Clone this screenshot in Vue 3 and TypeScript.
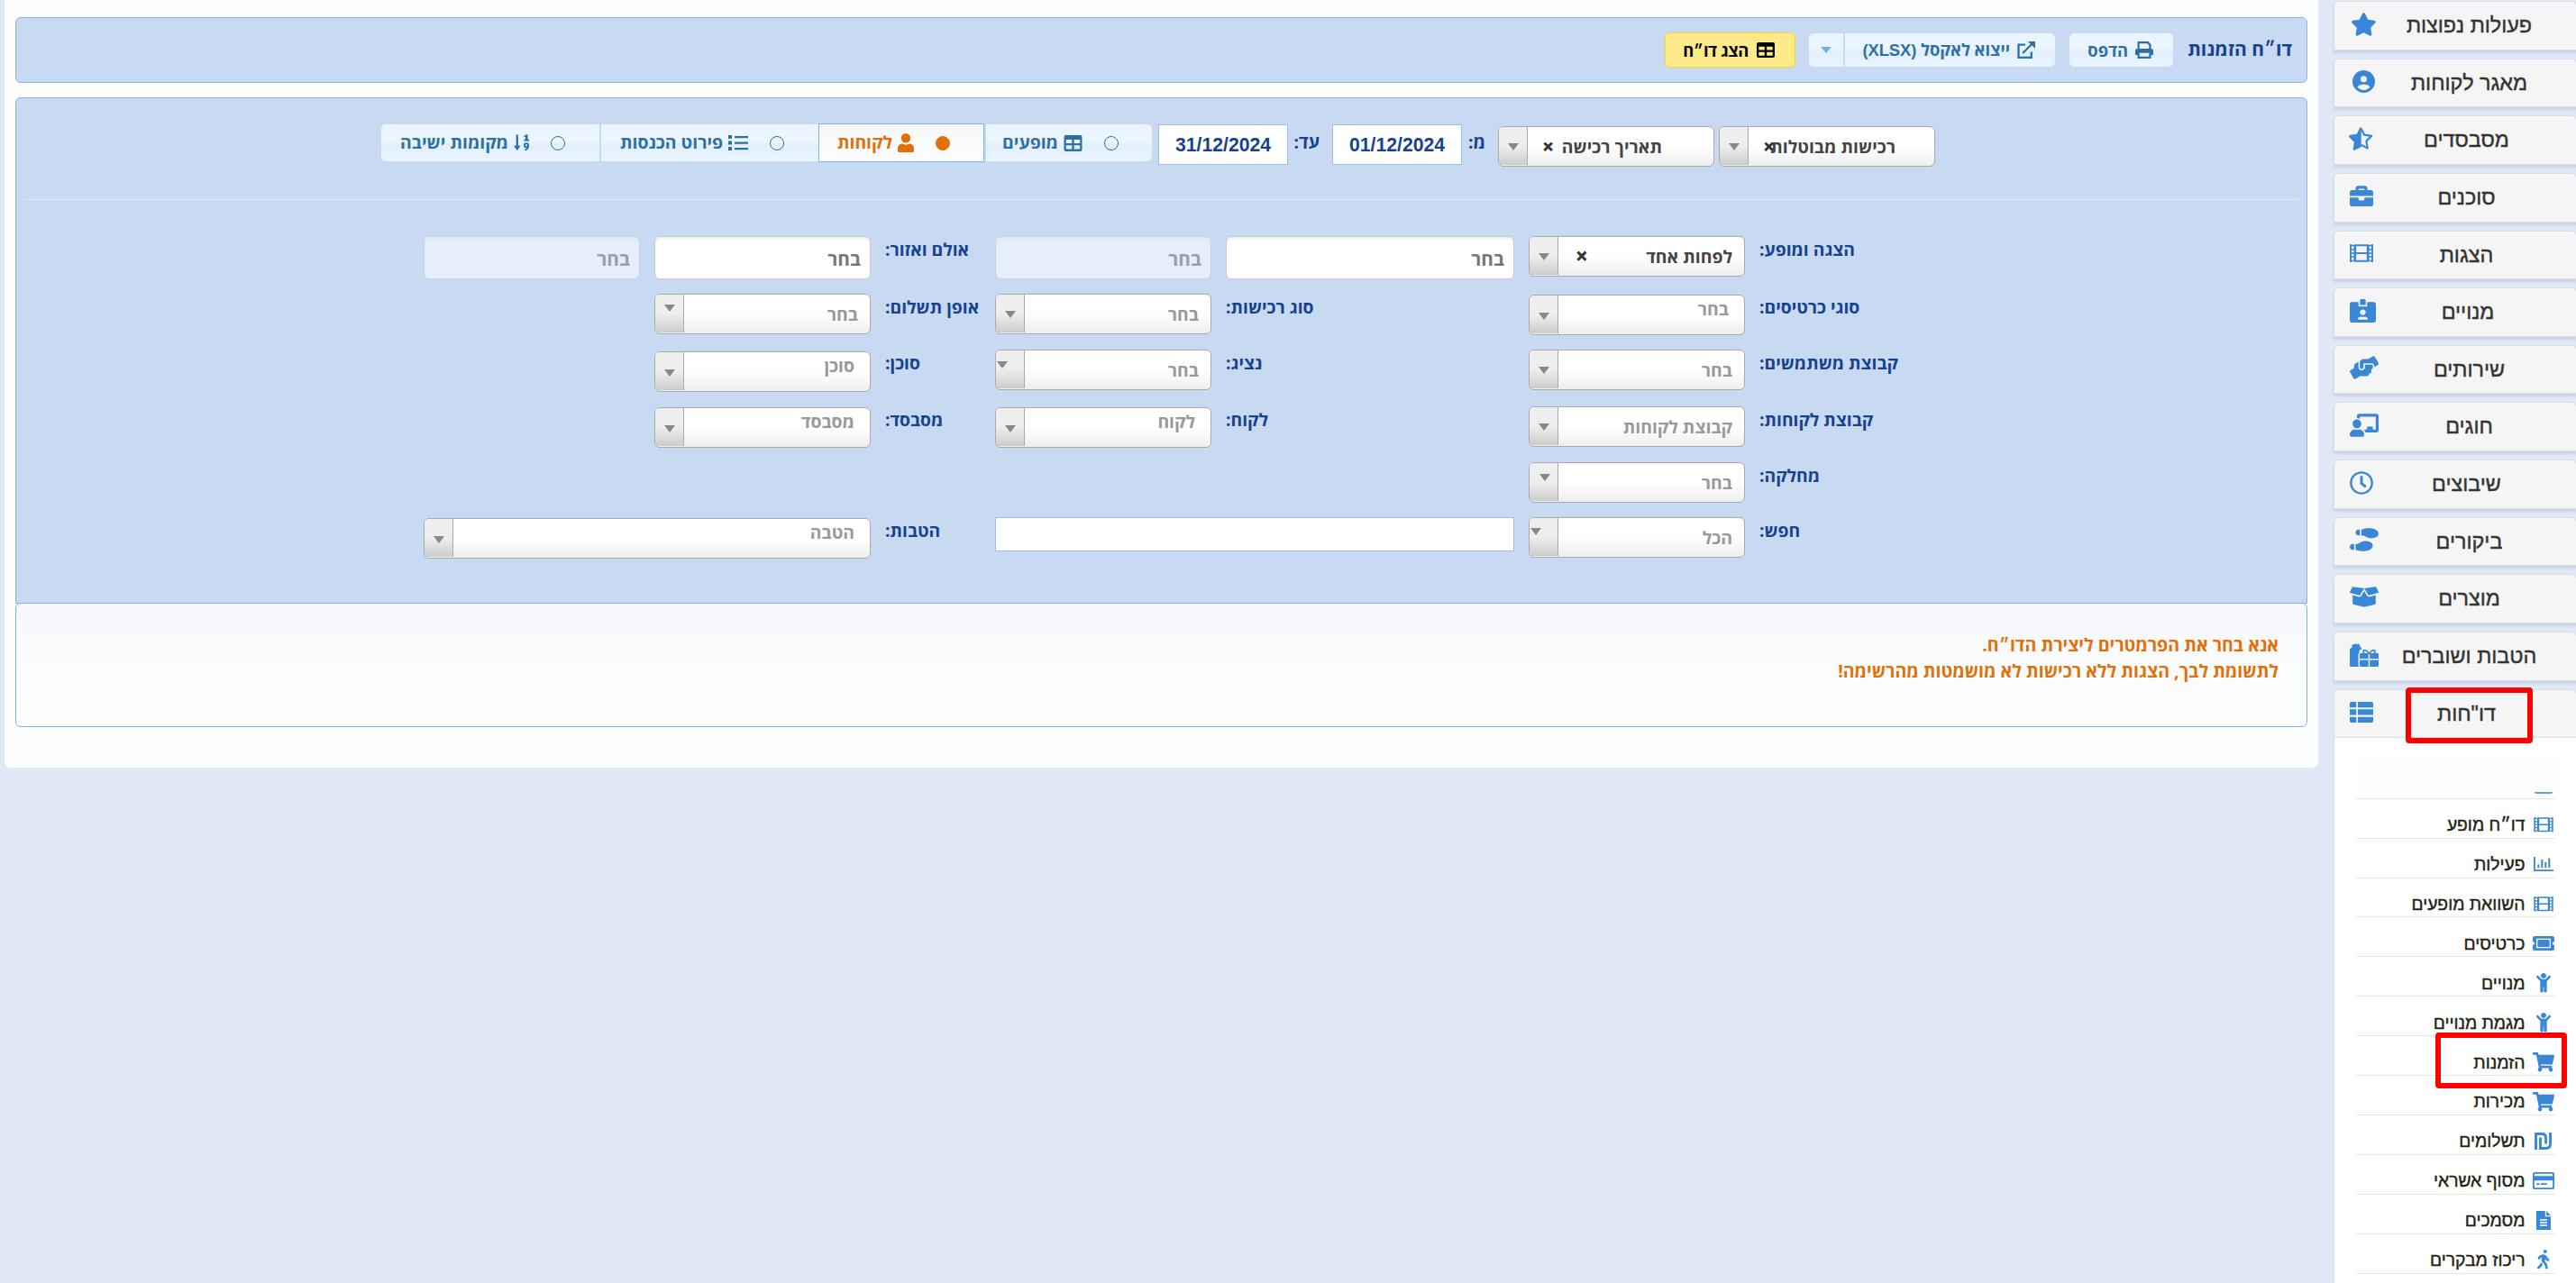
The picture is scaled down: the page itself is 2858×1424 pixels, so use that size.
<script setup lang="ts">
interface Icon { vb: string; body: string }
interface NavItem { text: string; icon: string; w: number; h: number; slot?: number; marked?: boolean }
interface Field {
  kind: 'select' | 'input' | 'disabled' | 'label' | 'plain'
  col: string
  row: number
  text?: string
  dy?: number
  high?: boolean
  picked?: boolean
  ax?: number
  ay?: number
  aw?: number
}

const p = (vb: string, d: string): Icon => ({ vb, body: `<path fill="currentColor" d="${d}"/>` })

const icons: Record<string, Icon> = {
  star: p('18 0 540 512', 'M259.3 17.8L194 150.2 47.9 171.5c-26.2 3.8-36.7 36.1-17.7 54.6l105.7 103-25 145.5c-4.5 26.3 23.2 46 46.4 33.7L288 439.6l130.7 68.7c23.2 12.2 50.9-7.4 46.4-33.7l-25-145.5 105.7-103c19-18.5 8.5-50.8-17.7-54.6L382 150.2 316.7 17.8c-11.7-23.6-45.6-23.9-57.4 0z'),
  halfStar: {
    vb: '18 0 540 512',
    body: '<path fill="currentColor" d="M292 0c-13 0-26 5.900-32.700 17.800L194 150.200 47.900 171.500c-26.200 3.800-36.700 36.100-17.700 54.600l105.700 103-25 145.500c-4.500 26.300 23.200 46 46.400 33.700L292 437z"/><path fill="none" stroke="currentColor" stroke-width="44" stroke-linejoin="round" d="M288 24l72 146 162 24-117 114 28 160-145-76"/>'
  },
  user: p('0 0 512 512', 'M399 384.200C376.900 345.800 335.400 320 288 320H224c-47.400 0-88.900 25.800-111 64.200c35.200 39.200 86.200 63.800 143 63.800s107.800-24.700 143-63.800zM0 256a256 256 0 1 1 512 0A256 256 0 1 1 0 256zm256 16a72 72 0 1 0 0-144 72 72 0 1 0 0 144z'),
  briefcase: p('0 32 512 448', 'M320 336c0 8.840-7.160 16-16 16h-96c-8.840 0-16-7.160-16-16v-48H0v144c0 25.600 22.400 48 48 48h416c25.600 0 48-22.400 48-48V288H320v48zm144-208h-80V80c0-25.600-22.400-48-48-48H176c-25.600 0-48 22.400-48 48v48H48c-25.600 0-48 22.400-48 48v80h512v-80c0-25.600-22.400-48-48-48zm-144 0H192V96h128v32z'),
  film: {
    vb: '0 0 26 20',
    body: '<path fill="none" stroke="currentColor" stroke-width="1.900" d="M6.200 1.200h13.600v17.600H6.200zM6.200 10h13.600M1 0v20M25 0v20"/><path fill="none" stroke="currentColor" stroke-width="1.500" d="M1 1.600h5M1 5.900h5M1 10h5M1 14.100h5M1 18.400h5M20 1.600h5M20 5.900h5M20 10h5M20 14.100h5M20 18.400h5M5.200 1v18M20.800 1v18"/>'
  },
  idCard: p('0 0 576 512', 'M528 64H384v96H192V64H48C21.500 64 0 85.500 0 112v352c0 26.500 21.500 48 48 48h480c26.500 0 48-21.500 48-48V112c0-26.500-21.500-48-48-48zM288 224c35.300 0 64 28.700 64 64s-28.700 64-64 64-64-28.700-64-64 28.700-64 64-64zm93.300 224H194.700c-10.400 0-18.800-10-15.600-19.800 8.300-25.600 32.400-44.200 60.900-44.200h8.200c12.300 5.100 25.700 8 39.800 8s27.600-2.900 39.800-8h8.200c28.400 0 52.500 18.500 60.900 44.200 3.200 9.900-5.200 19.800-15.600 19.800zM352 32c0-17.700-14.300-32-32-32h-64c-17.700 0-32 14.300-32 32v96h128V32z'),
  hands: p('0 0 640 512', 'M488 192H336v56c0 39.700-32.300 72-72 72s-72-32.300-72-72V126.400l-64.900 39C107.800 176.900 96 197.800 96 220.200v47.300l-80 46.200C.7 322.500-4.600 342.100 4.300 357.400l80 138.600c8.800 15.300 28.400 20.500 43.700 11.700L231.400 448H368c35.300 0 64-28.700 64-64h16c17.700 0 32-14.300 32-32v-64h8c13.300 0 24-10.700 24-24v-48c0-13.300-10.700-24-24-24zm147.700-37.400L555.700 16C546.900.7 527.300-4.500 512 4.300L408.600 64H306.400c-12 0-23.700 3.400-33.900 9.700L239 94.600c-9.400 5.800-15 16.100-15 27.100V248c0 22.100 17.900 40 40 40s40-17.900 40-40v-88h184c30.900 0 56 25.100 56 56v28.500l80-46.200c15.300-8.900 20.500-28.400 11.700-43.700z'),
  teacher: p('0 0 640 512', 'M208 352c-2.390 0-4.780.35-7.060 1.090C187.980 357.300 174.350 360 160 360c-14.350 0-27.980-2.700-40.950-6.910-2.280-.74-4.660-1.090-7.050-1.090C49.940 352-.33 402.480 0 464.620.14 490.880 21.730 512 48 512h224c26.270 0 47.860-21.120 48-47.380.33-62.140-49.940-112.620-112-112.620zm-48-32c53.020 0 96-42.980 96-96s-42.980-96-96-96-96 42.980-96 96 42.980 96 96 96zM592 0H208c-26.470 0-48 22.250-48 49.590V96c23.420 0 45.100 6.780 64 17.800V64h352v288h-64v-64H384v64h-76.240c19.100 16.690 33.120 38.730 39.690 64H592c26.470 0 48-22.250 48-49.590V49.590C640 22.250 618.470 0 592 0z'),
  clock: {
    vb: '0 0 26 26',
    body: '<circle cx="13" cy="13" r="11.700" fill="none" stroke="currentColor" stroke-width="2.300"/><path fill="none" stroke="currentColor" stroke-width="2.900" d="M13 5.300V13.500l4.800 3.800"/>'
  },
  shoes: p('0 0 640 512', 'M192 160h32V32h-32c-35.350 0-64 28.650-64 64s28.650 64 64 64zM0 416c0 35.350 28.650 64 64 64h32V352H64c-35.350 0-64 28.650-64 64zm337.460-128c-34.910 0-76.160 13.120-104.730 32-24.790 16.380-44.520 32-104.730 32v128l57.530 15.970c26.210 7.280 53.010 13.120 80.310 15.050 32.690 2.310 65.600.67 97.580-6.200C472.900 481.300 512 429.220 512 384c0-64-84.180-96-174.540-96zM491.420 7.190C459.440.32 426.530-1.330 393.840.99c-27.300 1.930-54.100 7.770-80.310 15.040L256 32v128c60.200 0 79.940 15.620 104.730 32 28.570 18.880 69.820 32 104.730 32C555.820 224 640 192 640 128c0-45.220-39.100-97.300-148.580-120.810z'),
  box: p('0 32 640 448', 'M425.700 256c-16.900 0-32.800-9-41.400-23.400L320 126l-64.200 106.600c-8.700 14.500-24.600 23.500-41.500 23.500-4.500 0-9-.6-13.300-1.900L64 215v178c0 14.700 10 27.500 24.200 31l216.200 54.100c10.200 2.500 20.900 2.500 31 0L551.800 424c14.200-3.600 24.200-16.400 24.200-31V215l-137 39.100c-4.300 1.300-8.800 1.900-13.300 1.900zm212.600-112.200L586.800 41c-3.100-6.200-9.800-9.800-16.700-8.900L320 64l91.700 152.100c3.800 6.300 11.400 9.300 18.500 7.300l197.900-56.500c9.900-2.900 14.700-13.900 10.200-23.100zM53.200 41L1.700 143.800c-4.600 9.200.3 20.200 10.100 23l197.900 56.500c7.100 2 14.700-1 18.500-7.300L320 64 69.800 32.100c-6.900-.8-13.500 2.700-16.600 8.900z'),
  gifts: {
    vb: '0 0 32 26',
    body: '<path fill="currentColor" d="M2 5L3 3.500 1.600 2.200 3.600 1.800 4 .2 5.900 1.500 7 0l1.200 1.500L10 .3l.4 1.600 2 .3L11 3.500 12.800 5c.5.500.6 1 .4 1.500C11 7 10 8.800 10.500 10.500 9.800 11.200 9.500 12 9.500 13v11c0 .8.200 1.400.5 2H1.500A1.500 1.500 0 0 1 0 24.500V7A2.200 2.200 0 0 1 2 5z"/><path fill="currentColor" d="M11 17v-4.500c0-.8.600-1.400 1.400-1.400H20.700V17zM22.200 11.100h8.400c.8 0 1.400.6 1.400 1.400V17h-9.800zM11 18.600h9.700V26h-8.300c-.8 0-1.400-.6-1.400-1.400zM22.200 18.600H32v6c0 .8-.6 1.400-1.400 1.400h-8.400z"/><path fill="none" stroke="currentColor" stroke-width="1.700" d="M16.500 11.500c-2.500-1-1.800-4 .3-3.800 1.900.2 3.200 2 4.700 3.800 1.500-1.800 2.800-3.600 4.700-3.800 2.100-.2 2.800 2.800.3 3.800"/>'
  },
  thList: {
    vb: '0 0 26 23',
    body: '<path fill="currentColor" d="M1.200 0h6v6.300H0V1.200zM9 0h15.800L26 1.200v5.100H9zM0 8.300h7.200v6.300H0zM9 8.300h17v6.300H9zM0 16.700h7.200V23h-6L0 21.800zM9 16.700h17v5.100L24.800 23H9z"/>'
  },
  bars: {
    vb: '0 0 22 16',
    body: '<path fill="none" stroke="currentColor" stroke-width="1.800" d="M.9 0v15.100H22"/><path fill="none" stroke="currentColor" stroke-width="2" d="M5.300 12.300V8.500M9.300 12.300V3M13.300 12.300V6M17.300 12.300V1.500"/>'
  },
  ticket: p('0 64 576 384', 'M128 160h320v192H128V160zm400 96c0 26.510 21.490 48 48 48v96c0 26.510-21.490 48-48 48H48c-26.510 0-48-21.490-48-48v-96c26.510 0 48-21.490 48-48s-21.490-48-48-48v-96c0-26.510 21.490-48 48-48h480c26.510 0 48 21.490 48 48v96c-26.510 0-48 21.490-48 48zm-48-104c0-13.255-10.745-24-24-24H120c-13.255 0-24 10.745-24 24v208c0 13.255 10.745 24 24 24h336c13.255 0 24-10.745 24-24V152z'),
  child: p('0 0 384 512', 'M120 72c0-39.765 32.235-72 72-72s72 32.235 72 72c0 39.764-32.235 72-72 72s-72-32.236-72-72zm254.627 1.373c-12.496-12.497-32.758-12.497-45.254 0L242.745 160H141.254L54.627 73.373c-12.496-12.497-32.758-12.497-45.254 0-12.497 12.497-12.497 32.758 0 45.255L104 213.254V480c0 17.673 14.327 32 32 32h16c17.673 0 32-14.327 32-32V368h16v112c0 17.673 14.327 32 32 32h16c17.673 0 32-14.327 32-32V213.254l94.627-94.626c12.497-12.497 12.497-32.757 0-45.255z'),
  cart: p('0 0 576 512', 'M528.120 301.319l47.273-208C578.806 78.301 567.391 64 551.990 64H159.208l-9.166-44.810C147.758 8.021 137.930 0 126.529 0H24C10.745 0 0 10.745 0 24v16c0 13.255 10.745 24 24 24h69.883l70.248 343.435C147.325 417.100 136 435.222 136 456c0 30.928 25.072 56 56 56s56-25.072 56-56c0-15.674-6.447-29.835-16.824-40h209.647C430.447 426.165 424 440.326 424 456c0 30.928 25.072 56 56 56s56-25.072 56-56c0-22.172-12.888-41.332-31.579-50.405l5.517-24.276c3.413-15.018-8.002-29.319-23.403-29.319H218.117l-6.545-32h293.145c11.206 0 20.920-7.754 23.403-18.681z'),
  shekel: {
    vb: '0 0 19 19',
    body: '<path fill="none" stroke="currentColor" stroke-width="2.900" d="M1.500 19V1.500h6.500c2.800 0 4.600 1.600 4.600 4.400V12.500M6.400 5.500V17.500h6.200c3.200 0 4.900-1.800 4.900-4.800V0"/>'
  },
  credit: {
    vb: '0 0 24 19',
    body: '<path fill="currentColor" fill-rule="evenodd" d="M2 0h20a2 2 0 0 1 2 2v15a2 2 0 0 1-2 2H2a2 2 0 0 1-2-2V2a2 2 0 0 1 2-2zM1.800 2.700V4.300H22.200V2.700l-.7-.9H2.500zM1.800 9.200v7.300l.7.700h19l.7-.7V9.200zM4.200 12.300h3.300v1.800H4.200zM9 12.300h6.800v1.800H9z"/>'
  },
  file: {
    vb: '0 0 16 21',
    body: '<path fill="currentColor" fill-rule="evenodd" d="M0 0h9.800v6.200H16V21H0zM11 0l5 5h-5zM4 9.200v1.600h8V9.200zM4 12.200v1.600h8v-1.600zM4 15.200v1.600h8v-1.600z"/>'
  },
  walk: p('0 0 320 512', 'M208 96c26.500 0 48-21.500 48-48S234.500 0 208 0s-48 21.500-48 48 21.500 48 48 48zm94.500 149.100l-23.300-11.800-9.700-29.400c-14.700-44.600-55.700-75.800-102.200-75.900-36-.1-55.900 10.100-93.300 25.200-21.600 8.700-39.300 25.200-49.700 46.200L17.600 213c-7.800 15.800-1.500 35 14.200 42.900 15.600 7.900 34.600 1.500 42.500-14.300L81 228c3.500-7 9.300-12.500 16.500-15.400l26.800-10.800-15.200 60.700c-5.200 20.800.4 42.900 14.900 58.800l59.900 65.400c7.200 7.900 12.300 17.400 14.900 27.700l18.300 73.300c4.300 17.100 21.700 27.600 38.800 23.300 17.100-4.300 27.600-21.700 23.300-38.800l-22.200-89c-2.600-10.300-7.700-19.900-14.900-27.700l-45.500-49.700 17.200-68.700 5.500 16.500c5.300 16.100 16.700 29.400 31.700 37l23.300 11.800c15.600 7.900 34.600 1.500 42.500-14.300 7.700-15.700 1.400-35.100-14.300-43zM73.600 385.800c-3.200 8.100-8 15.400-14.200 21.500l-50 50.100c-12.500 12.500-12.500 32.800 0 45.300s32.700 12.500 45.200 0l59.400-59.400c6.100-6.100 10.900-13.400 14.200-21.500l13.500-33.800c-55.300-60.300-38.700-41.800-47.400-53.700l-20.700 51.500z'),
  print: {
    vb: '0 0 20 19',
    body: '<path fill="currentColor" d="M2.500 8h15A2.500 2.500 0 0 1 20 10.500V15h-3v-2.300H3V15H0v-4.500A2.500 2.500 0 0 1 2.500 8z"/><path fill="none" stroke="currentColor" stroke-width="2.200" d="M3.600 9V1.100h10.200l2.600 2.600V9M3.600 12.500v5.400h12.800v-5.400"/>'
  },
  external: {
    vb: '0 0 20 19',
    body: '<path fill="none" stroke="currentColor" stroke-width="2.300" d="M9 3.600H1.500V17.800H15.800V11.500M6.200 13L17 2.200"/><path fill="currentColor" d="M12 0h8v8l-2.700-2.700-2.600-2.600z"/>'
  },
  table: {
    vb: '0 0 20 18',
    body: '<path fill="currentColor" fill-rule="evenodd" d="M2 0h16a2 2 0 0 1 2 2v14a2 2 0 0 1-2 2H2a2 2 0 0 1-2-2V2a2 2 0 0 1 2-2zM2.300 5v4h6.500V5zM11.200 5v4h6.500V5zM2.300 11.300v4.200h6.500v-4.200zM11.200 11.300v4.200h6.500v-4.200z"/>'
  },
  person: {
    vb: '0 0 18 21',
    body: '<circle cx="9" cy="5.200" r="5.200" fill="currentColor"/><path fill="currentColor" d="M5 11.500c2.500 1.500 5.500 1.500 8 0 3 0 5 2.300 5 5.200v2.500c0 1-.8 1.800-1.800 1.800H1.800C.8 21 0 20.200 0 19.200v-2.500c0-2.900 2-5.200 5-5.200z"/>'
  },
  list: {
    vb: '0 0 22 17',
    body: '<path fill="currentColor" d="M0 0h4v4H0zM0 6.500h4v4H0zM0 13h4v4H0zM7 .9h15v2.400H7zM7 7.400h15v2.400H7zM7 13.900h15v2.400H7z"/>'
  },
  sort: {
    vb: '0 0 18 19',
    body: '<path fill="currentColor" d="M2.800 0h2.400v13H8l-4 5.500L0 13h2.800zM12 1.500L14.500 0H16.500v5.500H18V7.500h-6V5.500h1.700V2.500H12z"/><circle cx="14.800" cy="12.500" r="2.200" fill="none" stroke="currentColor" stroke-width="2"/><path fill="none" stroke="currentColor" stroke-width="2" d="M17 12.500c0 3-1 4.800-3.800 5.500"/>'
  }
}

const nav: NavItem[] = [
  { text: 'פעולות נפוצות', icon: 'star', w: 27, h: 26, slot: 32 },
  { text: 'מאגר לקוחות', icon: 'user', w: 25, h: 25, slot: 32 },
  { text: 'מסבסדים', icon: 'halfStar', w: 27, h: 26, slot: 26 },
  { text: 'סוכנים', icon: 'briefcase', w: 26, h: 23 },
  { text: 'הצגות', icon: 'film', w: 26, h: 20 },
  { text: 'מנויים', icon: 'idCard', w: 29, h: 26 },
  { text: 'שירותים', icon: 'hands', w: 32, h: 26 },
  { text: 'חוגים', icon: 'teacher', w: 32, h: 26 },
  { text: 'שיבוצים', icon: 'clock', w: 26, h: 26 },
  { text: 'ביקורים', icon: 'shoes', w: 32, h: 26 },
  { text: 'מוצרים', icon: 'box', w: 32, h: 23 },
  { text: 'הטבות ושוברים', icon: 'gifts', w: 32, h: 26 },
  { text: 'דו"חות', icon: 'thList', w: 26, h: 23, marked: true }
]

const reports: NavItem[] = [
  { text: 'דו״ח מופע', icon: 'film', w: 22, h: 16.500 },
  { text: 'פעילות', icon: 'bars', w: 22, h: 16 },
  { text: 'השוואת מופעים', icon: 'film', w: 22, h: 16.500 },
  { text: 'כרטיסים', icon: 'ticket', w: 24, h: 16 },
  { text: 'מנויים', icon: 'child', w: 16, h: 21.500 },
  { text: 'מגמת מנויים', icon: 'child', w: 16, h: 21.500 },
  { text: 'הזמנות', icon: 'cart', w: 24, h: 21.500, marked: true },
  { text: 'מכירות', icon: 'cart', w: 24, h: 21.500 },
  { text: 'תשלומים', icon: 'shekel', w: 19, h: 19 },
  { text: 'מסוף אשראי', icon: 'credit', w: 24, h: 19 },
  { text: 'מסמכים', icon: 'file', w: 16, h: 21 },
  { text: 'ריכוז מבקרים', icon: 'walk', w: 13.500, h: 21.500 }
]

const tabs = [
  { text: 'מופעים', icon: 'table', w: 21, h: 18, width: 186, on: false },
  { text: 'לקוחות', icon: 'person', w: 18, h: 21, width: 184, on: true },
  { text: 'פירוט הכנסות', icon: 'list', w: 22, h: 17, width: 243, on: false },
  { text: 'מקומות ישיבה', icon: 'sort', w: 17, h: 19, width: 242, on: false }
]

const fields: Field[] = [
  { kind: 'label', col: '6', row: 1, text: 'הצגה ומופע:' },
  { kind: 'select', col: '5', row: 1, text: 'לפחות אחד', picked: true },
  { kind: 'input', col: '4', row: 1, text: 'בחר' },
  { kind: 'disabled', col: '3b', row: 1, text: 'בחר' },
  { kind: 'label', col: '3', row: 1, text: 'אולם ואזור:' },
  { kind: 'input', col: '2', row: 1, text: 'בחר' },
  { kind: 'disabled', col: '1', row: 1, text: 'בחר' },
  { kind: 'label', col: '6', row: 2, text: 'סוגי כרטיסים:' },
  { kind: 'select', col: '5', row: 2, text: 'בחר', dy: 1, high: true, ax: 11, ay: 20, aw: 13 },
  { kind: 'label', col: '4', row: 2, text: 'סוג רכישות:' },
  { kind: 'select', col: '3b', row: 2, text: 'בחר' },
  { kind: 'label', col: '3', row: 2, text: 'אופן תשלום:' },
  { kind: 'select', col: '2', row: 2, text: 'בחר', ay: 12, aw: 13 },
  { kind: 'label', col: '6', row: 3, text: 'קבוצת משתמשים:' },
  { kind: 'select', col: '5', row: 3, text: 'בחר' },
  { kind: 'label', col: '4', row: 3, text: 'נציג:' },
  { kind: 'select', col: '3b', row: 3, text: 'בחר', ax: 2, ay: 13, aw: 13 },
  { kind: 'label', col: '3', row: 3, text: 'סוכן:' },
  { kind: 'select', col: '2', row: 3, text: 'סוכן', dy: 2, high: true, ax: 11, ay: 20, aw: 13 },
  { kind: 'label', col: '6', row: 4, text: 'קבוצת לקוחות:' },
  { kind: 'select', col: '5', row: 4, text: 'קבוצת לקוחות' },
  { kind: 'label', col: '4', row: 4, text: 'לקוח:' },
  { kind: 'select', col: '3b', row: 4, text: 'לקוח', dy: 1, high: true, ax: 11, ay: 20, aw: 13 },
  { kind: 'label', col: '3', row: 4, text: 'מסבסד:' },
  { kind: 'select', col: '2', row: 4, text: 'מסבסד', dy: 1, high: true, ax: 11, ay: 20, aw: 13 },
  { kind: 'label', col: '6', row: 5, text: 'מחלקה:' },
  { kind: 'select', col: '5', row: 5, text: 'בחר', ax: 12, ay: 13, aw: 13 },
  { kind: 'label', col: '6', row: 6, text: 'חפש:' },
  { kind: 'select', col: '5', row: 6, text: 'הכל', ax: 2, ay: 12, aw: 13 },
  { kind: 'plain', col: '34', row: 6 },
  { kind: 'label', col: '3', row: 6, text: 'הטבות:' },
  { kind: 'select', col: '12', row: 6, text: 'הטבה', dy: 1, high: true, ax: 11, ay: 20, aw: 13 }
]

const columns: Record<string, string> = {
  '1': '1', '2': '2', '3': '3', '3b': '4', '4': '5', '5': '6', '6': '7', '34': '4 / 6', '12': '1 / 3'
}
const place = (f: Field) => ({ gridColumn: columns[f.col], gridRow: String(f.row), marginTop: (f.dy ?? 0) + 'px' })
const arrow = (f: Partial<Field>) => ({
  marginLeft: (f.ax ?? 11) - 1 + 'px',
  marginTop: (f.ay ?? 19) - 1 + 'px',
  borderLeftWidth: (f.aw ?? 12) / 2 + 'px',
  borderRightWidth: (f.aw ?? 12) / 2 + 'px'
})
</script>

<template>
  <div class="page">
    <main class="main">
      <header class="bar">
        <h1 class="title">דו״ח הזמנות</h1>
        <button class="btn print">
          <svg width="20" height="19" :viewBox="icons.print.vb" v-html="icons.print.body" />
          <span>הדפס</span>
        </button>
        <div class="export">
          <button class="btn excel">
            <svg width="20" height="19" :viewBox="icons.external.vb" v-html="icons.external.body" />
            <span>ייצוא לאקסל <span class="latin">(XLSX)</span></span>
          </button>
          <button class="btn more"><i class="caret" /></button>
        </div>
        <button class="btn show">
          <svg width="20" height="17" :viewBox="icons.table.vb" v-html="icons.table.body" preserveAspectRatio="none" />
          <span>הצג דו״ח</span>
        </button>
      </header>

      <section class="filters">
        <div class="top-row">
          <div class="select first">
            <span class="value dark cancel">רכישות מבוטלות</span>
            <span class="clear">×</span>
            <span class="drop"><i :style="arrow({})" /></span>
          </div>
          <div class="select second">
            <span class="value dark bydate">תאריך רכישה</span>
            <span class="clear">×</span>
            <span class="drop"><i :style="arrow({})" /></span>
          </div>
          <span class="range from">מ:</span>
          <div class="date">01/12/2024</div>
          <span class="range to">עד:</span>
          <div class="date">31/12/2024</div>
          <div class="tabs">
            <div v-for="t in tabs" :key="t.text" class="tab" :class="{ on: t.on }" :style="{ width: t.width + 'px' }">
              <i class="radio" />
              <svg :width="t.w" :height="t.h" :viewBox="icons[t.icon].vb" v-html="icons[t.icon].body" />
              <span>{{ t.text }}</span>
            </div>
          </div>
        </div>
        <div class="grid">
          <template v-for="(f, i) in fields" :key="i">
            <label v-if="f.kind === 'label'" class="label" :style="place(f)">{{ f.text }}</label>
            <div v-else-if="f.kind === 'select'" class="select" :class="{ high: f.high }" :style="place(f)">
              <span class="value" :class="{ dark: f.picked }">{{ f.text }}</span>
              <span v-if="f.picked" class="clear big">×</span>
              <span class="drop"><i :style="arrow(f)" /></span>
            </div>
            <div v-else-if="f.kind === 'plain'" class="plain" :style="place(f)" />
            <div v-else class="input" :class="f.kind" :style="place(f)">{{ f.text }}</div>
          </template>
        </div>
      </section>

      <section class="notice">
        <p>אנא בחר את הפרמטרים ליצירת הדו״ח.</p>
        <p>לתשומת לבך, הצגות ללא רכישות לא מושמטות מהרשימה!</p>
      </section>
    </main>

    <aside class="side">
      <div v-for="n in nav" :key="n.text" class="item" :class="{ open: n.marked }">
        <span class="glyph" :style="{ width: (n.slot ?? n.w) + 'px' }">
          <svg :width="n.w" :height="n.h" :viewBox="icons[n.icon].vb" v-html="icons[n.icon].body" />
        </span>
        <span class="name">{{ n.text }}</span>
        <span v-if="n.marked" class="mark nav-mark" />
      </div>
      <div class="sub">
        <div class="report blank"><span class="cover" /><span class="edge" /></div>
        <div v-for="r in reports" :key="r.text" class="report">
          <span class="sub-glyph">
            <svg :width="r.w" :height="r.h" :viewBox="icons[r.icon].vb" v-html="icons[r.icon].body" />
          </span>
          <span class="sub-name">{{ r.text }}</span>
          <span v-if="r.marked" class="mark sub-mark" />
        </div>
      </div>
    </aside>
  </div>
</template>

<style>
body { background: #dfe8f7; overflow: hidden; }
</style>

<style scoped>
* { box-sizing: border-box; }
.page {
  display: flex; height: 1424px; overflow: hidden; padding-left: 5px;
  font-family: "Open Sans", "Liberation Sans", sans-serif; background: #dfe8f7;
}
svg { display: block; flex: none; overflow: visible; }
.main {
  width: 2567px; height: 852px; flex: none; padding: 19px 12px 0;
  background: #fcfefe; border-radius: 0 0 6px 6px;
}
.bar {
  direction: rtl; display: flex; align-items: center; height: 73px; margin-bottom: 16px;
  padding-right: 16px; border: 1px solid #8fb0e4; border-radius: 6px; background: #c8daf2;
}
.title { width: 117px; margin: 0 0 0 15px; font-size: 21px; line-height: 30px; font-weight: 700; color: #17428d; white-space: nowrap; position: relative; top: -2px; }
.btn {
  display: flex; align-items: center; height: 37px; padding: 0; border: 0; font: 700 18.300px/30px "Open Sans", "Liberation Sans", sans-serif;
  color: #2e70a4; white-space: nowrap; background: linear-gradient(#eaf5fe 0 50%, #e0effc 50%, #eaf4fd); border-radius: 5px;
}
.print { width: 115px; padding-right: 22px; gap: 8px; }
.export { display: flex; gap: 2px; margin: 0 16px 0 15px; }
.excel { width: 233px; padding-right: 22px; gap: 8px; border-radius: 0 5px 5px 0; }
.latin { font-family: "Liberation Sans", sans-serif; font-size: 18.300px; }
.more { width: 38px; border-radius: 5px 0 0 5px; justify-content: center; }
.caret { border: 6px solid transparent; border-top: 7px solid #74b2e2; border-bottom: 0; }
.show { width: 145px; height: 39px; padding-right: 22px; gap: 9px; letter-spacing: -.35px; color: #000; background: #fceb88; border: 1px solid #fad42f; }

.filters { height: 562px; border: 1px solid #8fb0e4; border-radius: 6px 6px 0 0; background: #c8daf2; }
.top-row {
  direction: rtl; display: flex; align-items: flex-start; height: 113px; margin: 0 8px;
  padding: 29px 404px 0 0; border-bottom: 1px solid #dce8f8;
}
.select {
  direction: rtl; position: relative; display: flex; justify-content: space-between; height: 45px; overflow: hidden;
  border: 1px solid #aaa; border-radius: 6px; background: linear-gradient(#fff 50%, #eee);
}
.first, .second { width: 240px; margin-top: 2px; }
.second { margin-right: 5px; }
.value { padding-right: 13px; font-size: 19.400px; font-weight: 700; line-height: 44px; color: #999; white-space: nowrap; }
.high .value { padding-right: 17px; line-height: 30px; }
.value.dark { color: #444; }
.cancel { padding-right: 43px; }
.bydate { padding-right: 57px; }
.clear { position: absolute; left: 49px; top: 0; font: 700 19px/44px "Liberation Sans", sans-serif; color: #333; -webkit-text-stroke: .7px #333; }
.clear.big { left: 52px; font-size: 20px; line-height: 43px; }
.drop { direction: ltr; width: 32px; height: 42px; border-right: 1px solid #aaa; background: linear-gradient(#eee 50%, #ccc); }
.drop i { display: block; width: 0; height: 0; border: 0 solid transparent; border-top: 8px solid #888; }
.range { font-size: 19.500px; font-weight: 700; line-height: 40px; color: #17428d; white-space: nowrap; }
.from { width: 40px; padding-right: 14px; }
.to { width: 49px; padding-right: 14px; }
.date {
  width: 144px; height: 45px; border: 1px solid #9bbcec; background: #fff; text-align: center;
  font: 700 21.200px/43px "Liberation Sans", sans-serif; color: #17428d;
}
.tabs { display: flex; margin-right: 7px; }
.tab {
  display: flex; align-items: center; height: 41px; padding: 0 37px 0 0; color: #2e70a4;
  background: linear-gradient(#eaf5fe 0 50%, #e0effc 50%, #eaf4fd); border-left: 2px solid #c3dcf2;
}
.tab:first-child { border-radius: 0 5px 5px 0; }
.tab:last-child { border-radius: 5px 0 0 5px; border-left: 0; }
.tab.on { height: 43px; margin-top: -1px; color: #e17009; background: linear-gradient(#f6f8fb, #fcfdfe); border: 1px solid #7cb6e5; }
.tab:nth-child(n + 3) { padding-right: 38px; }
.tab svg { margin: 0 24px 0 6px; }
.tab span { font-size: 19.400px; font-weight: 700; line-height: 30px; white-space: nowrap; position: relative; top: -.500px; }
.radio { width: 16px; height: 16px; flex: none; border: 1.500px solid #2e70a4; border-radius: 50%; }
.on .radio { background: #e17009; border-color: #e17009; }

.grid {
  display: grid; align-items: start; column-gap: 16px; padding: 40px 0 0 452px;
  grid-template-columns: 240px 240px 106px 240px 320px 240px 200px;
  grid-template-rows: 64px 62px 63px 62px 61px 46px;
}
.label { direction: rtl; justify-self: start; font-size: 19.300px; font-weight: 700; line-height: 30px; color: #17428d; white-space: nowrap; }
.input {
  direction: rtl; height: 48px; padding-right: 10px; border: 1px solid #ccc; border-radius: 6px; background: #fff;
  box-shadow: inset 0 2px 3px rgba(0, 0, 0, .08); font-size: 20.800px; font-weight: 700; line-height: 48px; color: #777;
}
.disabled { background: #e6eef9; border-color: #c9d4e3; color: #97a0ac; box-shadow: inset 0 2px 3px rgba(0, 0, 0, .04); }
.plain { height: 38px; border: 1px solid #9bbcec; background: #fff; }

.notice {
  direction: rtl; height: 137px; padding: 31px 31px 0 0; border: 1px solid #7db5e4; border-radius: 6px; margin-top: -1px;
  height: 138px; background: linear-gradient(#f6f8fb, #f9fbfd 48%, #fbfcfe 52%, #fcfdfe);
}
.notice p { margin: 0; font-size: 19.570px; font-weight: 700; line-height: 29px; color: #e17009; white-space: nowrap; }

.side { width: 270px; margin-left: 16.500px; flex: none; padding-top: 1px; }
.item {
  position: relative; display: flex; height: 54.650px; margin-bottom: 9px; padding: 0 17px 0 17px;
  border: 1px solid #dcdde0; border-radius: 6px 6px 0 0; background: #f5f5f5; box-shadow: 0 3px 3px rgba(60, 80, 110, .13);
}
.item.open { margin-bottom: 0; box-shadow: none; }
.glyph { height: 49px; display: flex; align-items: center; justify-content: center; flex: none; color: #3987d6; }
.name { flex: 1; text-align: center; direction: rtl; font: 23.350px/52px "Liberation Sans", sans-serif; color: #333; white-space: nowrap; -webkit-text-stroke: .4px #333; }
.mark { position: absolute; border: 6px solid #fe0000; border-radius: 4px; }
.nav-mark { left: 79px; top: -3px; width: 141px; height: 62px; }
.sub { height: 620px; padding: 24px 24px 0 24px; margin-top: -.5px; border-left: 1px solid #dcdde0; background: #fff; }
.report { position: relative; direction: rtl; display: flex; align-items: flex-start; width: 221px; height: 43.920px; padding-top: 13.400px; border-bottom: 1px solid #e3e4e4; }
.sub-glyph { width: 26px; height: 30px; margin-left: 7px; display: flex; align-items: center; justify-content: center; color: #3987d6; }
.sub-name { font: 19.300px/32px "Liberation Sans", sans-serif; color: #1f2113; white-space: nowrap; -webkit-text-stroke: .4px #1f2113; }
.blank { padding: 0; display: block; }
.cover { display: block; width: 224px; height: 36px; margin-right: -3px; background: #fcfdfd; }
.edge { display: block; width: 20px; height: 2px; margin-right: 3px; background: #5d9fe0; border-radius: 0 0 2px 2px; }
.sub-mark { right: -13px; top: -4px; width: 146px; height: 62px; }
</style>
